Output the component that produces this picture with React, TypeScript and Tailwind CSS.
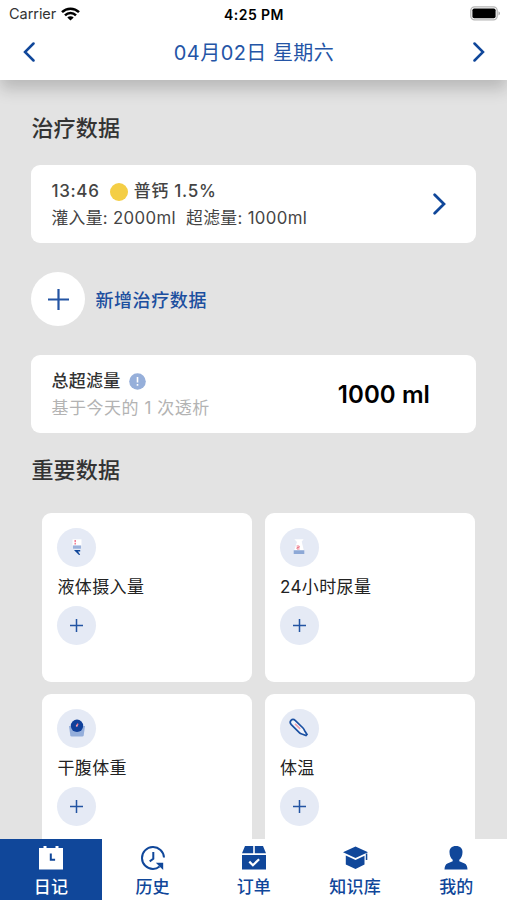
import React from "react";
import clsx from "clsx";

// The diary page: treatments of the day plus the vital data tiles

const StatusBar = () => {
  return (
    <div className="flex h-7 items-center justify-between pr-[6px] pl-[9px] text-black">
      <div className="flex w-[118px] items-center gap-[5px]">
        <span className="text-[14.5px] tracking-[-0.05px] text-[#333]">
          Carrier
        </span>
        <svg width="19" height="14" viewBox="0 0 19 14" className="-mt-px">
          <g fill="none" stroke="#000" strokeWidth="2.5">
            <path d="M1 5.1a12.2 12.2 0 0 1 17 0" />
            <path d="M4 8.3a7.9 7.9 0 0 1 11 0" />
          </g>
          <path d="M9.5 13.6 6.3 10.5a4.6 4.6 0 0 1 6.4 0z" />
        </svg>
      </div>
      <span className="text-[14px] font-semibold tracking-[0.45px]">
        4:25 PM
      </span>
      <div className="-mt-px flex w-[120px] justify-end">
        <svg width="31" height="15" viewBox="0 0 31 15">
          <rect
            x="0.8"
            y="0.8"
            width="26.4"
            height="13"
            rx="3.8"
            fill="#fff"
            stroke="#b5b5b5"
            strokeWidth="1.3"
          />
          <rect x="2.4" y="2.4" width="23.2" height="9.8" rx="1.8" />
          <path d="M28.5 5.2c2 .8 2 3.4 0 4.2z" fill="#a5a5a5" />
        </svg>
      </div>
    </div>
  );
};

const Chevron = ({ left, size }: { left?: boolean; size: number }) => {
  return (
    <svg
      width={size * 0.6}
      height={size}
      viewBox="0 0 12 20"
      fill="none"
      stroke="#10479a"
      strokeWidth="2.5"
      strokeLinecap="round"
    >
      <path d={left ? "M10.5 1.5 2 10l8.5 8.5" : "M1.5 1.5 10 10l-8.5 8.5"} />
    </svg>
  );
};

const Plus = ({ size, width }: { size: number; width: number }) => {
  return (
    <svg
      width={size}
      height={size}
      viewBox={`0 0 ${size} ${size}`}
      stroke="#2354a3"
      strokeWidth={width}
    >
      <path d={`M0 ${size / 2}h${size}M${size / 2} 0v${size}`} />
    </svg>
  );
};

const Header = () => {
  return (
    <header className="relative z-10 h-20 shrink-0 bg-white shadow-[0_9px_15px_rgba(0,0,0,0.19)]">
      <StatusBar />
      <div className="flex h-12 items-center justify-between pr-[22px] pl-[23px]">
        <Chevron left size={20} />
        <h1 className="pt-[2px] text-[20px] tracking-[0.45px] text-[#2455a6]">
          04月02日 星期六
        </h1>
        <Chevron size={20} />
      </div>
    </header>
  );
};

const SectionTitle = ({ children }: { children: React.ReactNode }) => {
  return (
    <h2 className="text-[22px] leading-8 font-medium tracking-[0.2px] text-[#333]">
      {children}
    </h2>
  );
};

const FluidIcon = () => (
  <svg width="20" height="20" viewBox="0 0 20 20">
    <path d="M5.5 2.3h9v6.2h-9z" fill="#fff" />
    <path d="M8.2 3v2.2M8.2 6v1.6" stroke="#f0718a" strokeWidth="1.4" />
    <path d="M6 8.5h8v3.2H6z" fill="#9ab1da" />
    <path d="M7 13h6.2v1.6H11l2.2 3.2-1.2.2-3.6-3.4z" fill="#10479a" />
  </svg>
);

const UrineIcon = () => (
  <svg width="20" height="20" viewBox="0 0 20 20">
    <path d="M5.3 2.3h9.4l-2 2.2 2 8.5H5.3L8 5z" fill="#fff" />
    <path
      d="M7.6 9h2.6v1.5H8V12h2.6"
      fill="none"
      stroke="#ec7c8d"
      strokeWidth="1"
    />
    <path d="M4.7 13.3h10.6V17H4.7z" fill="#8da8d6" />
  </svg>
);

const ScaleIcon = () => (
  <svg width="20" height="20" viewBox="0 0 20 20">
    <path d="M2 8h16l-1.3 9.2q-.2 1.3-1.5 1.3H4.8q-1.3 0-1.5-1.3z" fill="#94aedb" />
    <circle cx="10" cy="7.8" r="6.2" fill="#10409a" />
    <path d="M9.4 8.5 11 5.7" stroke="#f0718a" strokeWidth="1.5" />
    <circle cx="9.8" cy="7.7" r="0.9" fill="#e6a4ba" />
  </svg>
);

const ThermometerIcon = () => (
  <svg width="20" height="20" viewBox="0 0 20 20" fill="none">
    <path
      d="M2 2.4C3.2 1.2 5.2 1.5 6.4 2.6l7.6 7.4c1 1 1.2 1.9 1.8 3l2.2 3.5-1 1.1-3.4-1.4c-1.1-.4-2.2-.6-3-1.4L2.3 6.6C1.2 5.4 1 3.5 2 2.4z"
      fill="#f3f5fb"
      stroke="#1b50a2"
      strokeWidth="1.7"
    />
    <path d="m6 5.9 5.2 5" stroke="#ef9dab" strokeWidth="1.5" />
  </svg>
);

const tiles = [
  { label: "液体摄入量", icon: <FluidIcon /> },
  { label: "24小时尿量", icon: <UrineIcon /> },
  { label: "干腹体重", icon: <ScaleIcon /> },
  { label: "体温", icon: <ThermometerIcon /> },
];

const Tile = ({ label, icon }: { label: string; icon: React.ReactNode }) => {
  return (
    <div className="h-[168.5px] rounded-[9px] bg-white px-[15px] pt-[14.5px]">
      <div className="flex size-[39px] items-center justify-center rounded-full bg-[#e5eaf5]">
        {icon}
      </div>
      <div className="h-[39.5px] text-[17px] leading-[41px] tracking-[0.4px] text-[#222]">
        {label}
      </div>
      <button className="flex size-[39px] items-center justify-center rounded-full bg-[#e5eaf5]">
        <Plus size={13} width={1.5} />
      </button>
    </div>
  );
};

const DiaryIcon = () => (
  <svg width="24" height="24" viewBox="0 0 24 24">
    <path
      d="M0 2h4.5V0h3v2h9V0h3v2H24v21.5H0z"
      fill="#fff"
    />
    <path d="M11.8 7.5v6.3h4.3" fill="none" stroke="#10479a" strokeWidth="2" />
  </svg>
);

const HistoryIcon = () => (
  <svg width="24" height="24" viewBox="0 0 24 24" fill="none" stroke="#10479a">
    <path d="M23 11.5A11 11 0 1 0 12 23c2.6 0 4.8-.9 6.6-2.4" strokeWidth="2" />
    <path d="M12.3 6v6.8l-3.6 2.6" strokeWidth="2" />
    <path d="M14.8 16.8h7.4V24z" fill="#10479a" stroke="none" />
  </svg>
);

const OrderIcon = () => (
  <svg width="24" height="24" viewBox="0 0 24 24">
    <path
      d="M3 0h8.2v7.3H0zM12.8 0H21l3 7.3H12.8zM0 9h24v14.5H0z"
      fill="#10479a"
    />
    <path
      d="m7.3 15.6 3.6 3.6 6.2-6"
      fill="none"
      stroke="#fff"
      strokeWidth="2.2"
    />
  </svg>
);

const KnowledgeIcon = () => (
  <svg width="25" height="24" viewBox="0 0 25 24" fill="#10479a">
    <path d="M12.5.5 25 6.3 12.5 12 0 6.3z" />
    <path d="M2.8 9.5 12.5 14l9-4.2v8.7L12.5 23l-9.7-4.5z" />
    <path d="M22.8 7.5h1.5V14h-1.5z" />
  </svg>
);

const ProfileIcon = () => (
  <svg width="24" height="24" viewBox="0 0 24 24" fill="#10479a">
    <path d="M12 0c4.3 0 6.7 2.5 6.5 6.3-.1 3.4-1.3 6-3.2 7.5v1.5l5.3 2.3c1.9.9 2.7 2.8 2.9 5.9H.5c.2-3.1 1-5 2.9-5.9l5.3-2.3v-1.5c-1.9-1.5-3.1-4.1-3.2-7.5C5.3 2.5 7.7 0 12 0z" />
  </svg>
);

const tabs = [
  { label: "日记", icon: <DiaryIcon />, active: true },
  { label: "历史", icon: <HistoryIcon /> },
  { label: "订单", icon: <OrderIcon /> },
  { label: "知识库", icon: <KnowledgeIcon /> },
  { label: "我的", icon: <ProfileIcon /> },
];

const TabBar = () => {
  return (
    <nav className="grid h-[61px] shrink-0 grid-cols-[102px_repeat(4,1fr)] bg-white">
      {tabs.map(({ label, icon, active }) => (
        <button
          key={label}
          className={clsx(
            "flex flex-col items-center pt-[6.5px]",
            active ? "bg-[#10479a] text-white" : "text-[#10479a]",
          )}
        >
          {icon}
          <span className="mt-[5px] text-[17px] leading-6 font-medium tracking-[0.2px]">
            {label}
          </span>
        </button>
      ))}
    </nav>
  );
};

export default function App() {
  return (
    <div className="flex h-[900px] w-[507px] flex-col overflow-hidden bg-[#e3e3e3] font-['Inter','Noto_Sans_CJK_SC',sans-serif]">
      <Header />
      <main className="min-h-0 flex-1 overflow-hidden pt-8 pr-[31px] pl-[31.4px]">
        <SectionTitle>治疗数据</SectionTitle>

        <div className="mt-[21px] flex h-[78px] items-center justify-between rounded-[9px] bg-white pr-[30px] pl-5">
          <div className="pt-[2px] text-[#444]">
            <div className="flex h-[27px] items-center text-[17px] font-medium tracking-[0.7px]">
              <span>13:46</span>
              <span className="mr-[6px] ml-[10px] size-[18px] rounded-full bg-[#f4ce45]" />
              <span>普钙 1.5%</span>
            </div>
            <div className="h-[27px] text-[16.8px] leading-[27px] tracking-[0.35px] whitespace-pre">
              灌入量: 2000ml{"  "}超滤量: 1000ml
            </div>
          </div>
          <Chevron size={22} />
        </div>

        <button className="mt-[29px] flex items-center gap-[10px]">
          <span className="flex size-[54px] items-center justify-center rounded-full bg-white">
            <Plus size={21} width={2.2} />
          </span>
          <span className="pt-[2px] text-[18px] font-medium tracking-[0.6px] text-[#1c4f9f]">
            新增治疗数据
          </span>
        </button>

        <div className="mt-[29px] flex h-[78px] items-center justify-between rounded-[9px] bg-white pr-[46px] pl-5">
          <div className="pt-[2px]">
            <div className="flex h-[27px] items-center gap-2 text-[17px] font-medium tracking-[0.3px] text-[#333]">
              <span>总超滤量</span>
              <svg width="17" height="17" viewBox="0 0 17 17">
                <circle cx="8.5" cy="8.5" r="8.3" fill="#96afda" />
                <path d="M8.5 4v5.5M8.5 11v1.7" stroke="#fff" strokeWidth="1.6" />
              </svg>
            </div>
            <div className="h-[27px] text-[17px] leading-[27px] tracking-[0.55px] text-[#b3b3b3]">
              基于今天的 1 次透析
            </div>
          </div>
          <span className="pt-[2px] text-[24px] font-semibold tracking-[0.1px] text-black">
            1000 ml
          </span>
        </div>

        <div className="mt-[21px]">
          <SectionTitle>重要数据</SectionTitle>
        </div>
        <div className="mt-[27px] grid grid-cols-2 gap-[12.5px] pr-px pl-[11px]">
          {tiles.map(({ label, icon }) => (
            <Tile key={label} label={label} icon={icon} />
          ))}
        </div>
      </main>
      <TabBar />
    </div>
  );
}
